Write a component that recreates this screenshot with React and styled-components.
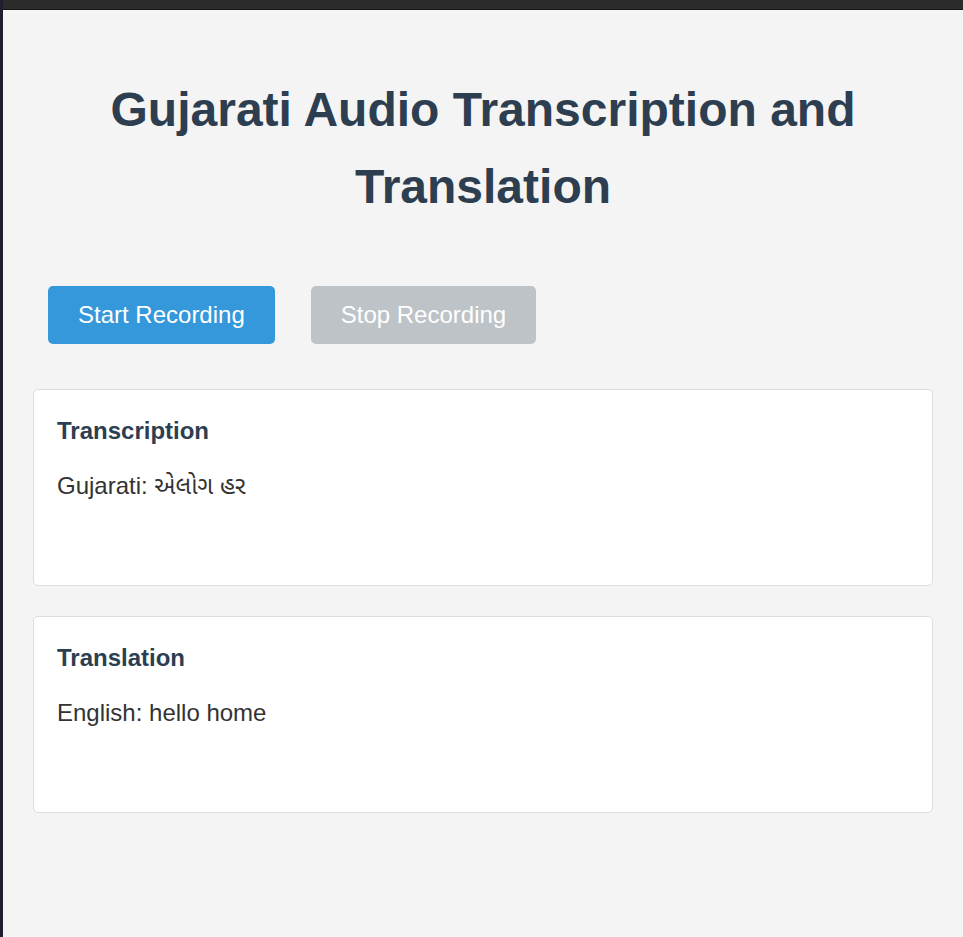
import React from "react";
import styled, { createGlobalStyle } from "styled-components";

const GlobalStyle = createGlobalStyle`
  html, body {
    margin: 0;
    padding: 0;
    background: #f4f4f4;
  }
  body {
    font-family: "Liberation Sans", Arial, "Noto Sans Gujarati", "Lohit Gujarati", sans-serif;
    color: #333333;
  }
  * { box-sizing: border-box; }
`;

const Frame = styled.div`
  min-height: 937px;
  border-left: 3px solid #1e1f2c;
  background: #f4f4f4;
  display: flex;
  flex-direction: column;
`;

const TopBar = styled.div`
  height: 10px;
  background: #2b2b2b;
  border-bottom: 1px solid #161616;
  flex: none;
`;

const Container = styled.main`
  width: 900px;
  margin: 0 auto;
  padding-top: 62px;
  display: flex;
  flex-direction: column;
`;

const Title = styled.h1`
  margin: 0;
  font-size: 48px;
  line-height: 1.6;
  font-weight: 700;
  text-align: center;
  color: #2c3e50;
`;

const Controls = styled.div`
  display: flex;
  gap: 36px;
  padding-left: 15px;
  margin-top: 60px;
  margin-bottom: 45px;
`;

const Button = styled.button`
  font-family: "Liberation Sans", Arial, sans-serif;
  font-size: 24px;
  line-height: 28px;
  padding: 15px 30px;
  border: none;
  border-radius: 5px;
  color: #ffffff;
  background: ${(p) => (p.$disabled ? "#bdc3c7" : "#3498db")};
  cursor: ${(p) => (p.$disabled ? "default" : "pointer")};
`;

const Card = styled.section`
  background: #ffffff;
  border: 1px solid #dddddd;
  border-radius: 5px;
  min-height: 197px;
  padding: 27px 23px;
  margin-bottom: 30px;
`;

const CardTitle = styled.h3`
  margin: 0 0 27px;
  font-size: 24px;
  line-height: 28px;
  font-weight: 700;
  color: #2c3e50;
`;

const CardText = styled.p`
  margin: 0;
  font-size: 24px;
  line-height: 28px;
  color: #333333;
`;

export default function App() {
  return (
    <>
      <GlobalStyle />
      <Frame>
        <TopBar />
        <Container>
          <Title>Gujarati Audio Transcription and Translation</Title>
          <Controls>
            <Button>Start Recording</Button>
            <Button $disabled disabled>
              Stop Recording
            </Button>
          </Controls>
          <Card>
            <CardTitle>Transcription</CardTitle>
            <CardText>Gujarati: એલોગ હર</CardText>
          </Card>
          <Card>
            <CardTitle>Translation</CardTitle>
            <CardText>English: hello home</CardText>
          </Card>
        </Container>
      </Frame>
    </>
  );
}
